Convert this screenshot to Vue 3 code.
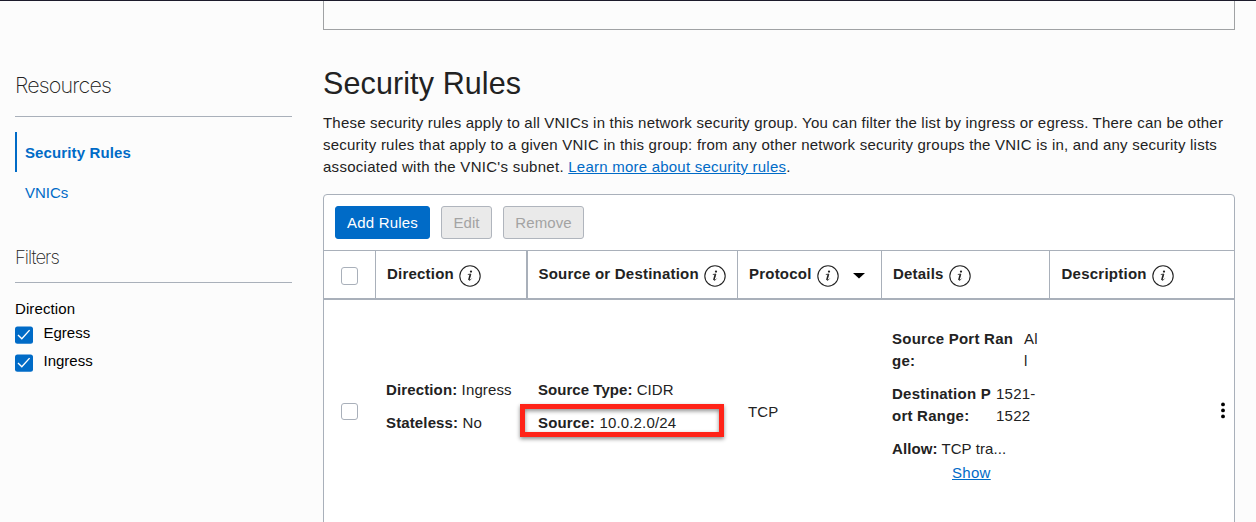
<script setup>
const columns = [
  { id: 'direction', label: 'Direction' },
  { id: 'source', label: 'Source or Destination' },
  { id: 'protocol', label: 'Protocol', sortable: true },
  { id: 'details', label: 'Details' },
  { id: 'description', label: 'Description' },
]
const filters = ['Egress', 'Ingress']
</script>

<template>
  <div class="page">
    <div class="topbar"></div>
    <div class="layout">
      <aside class="sidebar">
        <h3 class="resources">Resources</h3>
        <nav>
          <a class="nav active">Security Rules</a>
          <a class="nav">VNICs</a>
        </nav>
        <h4 class="filters">Filters</h4>
        <div class="filter-label">Direction</div>
        <label v-for="f in filters" :key="f" class="filter">
          <svg width="18" height="18" viewBox="0 0 18 18">
            <rect y="0.6" width="18" height="17.2" rx="2.5" fill="#006bc7" />
            <path d="M3 9.1 L6.8 12.7 L14.6 4.1" fill="none" stroke="#fff" stroke-width="1.4" />
          </svg>
          <span>{{ f }}</span>
        </label>
      </aside>

      <main class="main">
        <div class="panel-end"></div>
        <h1>Security Rules</h1>
        <div class="intro">
          <div class="l1">These security rules apply to all VNICs in this network security group. You can filter the list by ingress or egress. There can be other</div>
          <div class="l2">security rules that apply to a given VNIC in this group: from any other network security groups the VNIC is in, and any security lists</div>
          <div class="l3">associated with the VNIC's subnet. <a class="link">Learn more about security rules</a>.</div>
        </div>

        <section class="card">
          <div class="toolbar">
            <button class="btn primary">Add Rules</button>
            <button class="btn edit" disabled>Edit</button>
            <button class="btn remove" disabled>Remove</button>
          </div>
          <div class="grid head">
            <div class="cell check"><span class="box"></span></div>
            <div v-for="c in columns" :key="c.id" class="cell" :class="c.id">
              <b>{{ c.label }}</b>
              <svg class="info" width="22" height="22" viewBox="0 0 22 22">
                <circle cx="11" cy="11" r="10.2" fill="none" stroke="#222" stroke-width="1.1" />
                <circle cx="12" cy="6.6" r="1.15" fill="#222" />
                <path d="M8.8 9.5 L11.9 9 L10.1 14.6 Q10 15.7 10.9 15.2 Q11.6 14.7 12.5 13.7" fill="none" stroke="#222" stroke-width="0.8" />
                <path d="M11.3 9.2 L9.8 15" stroke="#222" stroke-width="1.4" />
              </svg>
              <svg v-if="c.sortable" class="caret" width="12" height="6" viewBox="0 0 12 6">
                <path d="M0 0 H12 L6 5.6 Z" fill="#000" />
              </svg>
            </div>
          </div>
          <div class="grid row">
            <div class="check"><span class="box"></span></div>
            <div class="stack dir">
              <p><b>Direction:</b> Ingress</p>
              <p><b>Stateless:</b> No</p>
            </div>
            <div class="stack src">
              <p><b>Source Type:</b> CIDR</p>
              <p class="marked"><b>Source:</b> 10.0.2.0/24<span class="marker"></span></p>
            </div>
            <div class="tcp">TCP</div>
            <div class="det">
              <div class="pair"><b class="k1">Source Port Ran<br>ge:</b><span>Al<br>l</span></div>
              <div class="pair"><b class="k2">Destination P<br>ort Range:</b><span>1521-<br>1522</span></div>
              <div class="allow"><b>Allow:</b> TCP tra...</div>
              <a class="link show">Show</a>
            </div>
            <div class="menu">
              <svg width="6" height="18" viewBox="0 0 6 18">
                <circle cx="3" cy="3.4" r="1.9" /><circle cx="3" cy="9.4" r="1.9" /><circle cx="3" cy="15.4" r="1.9" />
              </svg>
            </div>
          </div>
        </section>
      </main>
    </div>
  </div>
</template>

<style>
body { background: #fcfcfc; overflow: hidden; }
</style>

<style scoped>
* { box-sizing: border-box; }
.page {
  height: 522px;
  overflow: hidden;
  background: #fcfcfc;
  color: #222;
  font: 15px/22px "Liberation Sans", Arial, sans-serif;
}
h1, h3, h4, p { margin: 0; font-weight: 400; }
.topbar { height: 1px; background: #1c1b2b; }
.layout { display: flex; }
.sidebar { width: 277px; margin-left: 15px; padding-top: 69px; color: #000; }
.resources {
  height: 47px;
  border-bottom: 1px solid #a9b0ba;
  font: 200 21.5px/31px Inter, sans-serif;
  letter-spacing: -0.85px;
  color: #222;
}
nav { display: flex; flex-direction: column; padding-top: 15px; }
.nav { height: 40px; padding-left: 10px; line-height: 42px; color: #006bc7; }
.nav.active { border-left: 2px solid #006bc7; padding-left: 8px; font-weight: 700; letter-spacing: .12px; }
.filters {
  height: 43px;
  margin-top: 28px;
  border-bottom: 1px solid #a9b0ba;
  font: 200 18.5px/34px Inter, sans-serif;
  letter-spacing: -1px;
  color: #222;
}
.filter-label { margin-top: 15px; letter-spacing: .1px; }
.filter { display: flex; height: 28px; padding-top: 2px; }
.filter svg { margin-top: 4px; margin-right: 10.5px; }

.main { width: 912px; margin-left: 31px; }
.panel-end { height: 29px; border: 1px solid #a0a2a4; border-top: 0; }
h1 { margin-top: 33px; height: 49px; font-size: 30.5px; line-height: 40px; letter-spacing: .11px; }
.intro { height: 82px; white-space: nowrap; }
.l1 { letter-spacing: .208px; }
.l2 { letter-spacing: .226px; }
.l3 { letter-spacing: .28px; }
.l3 .link { letter-spacing: .225px; }
.link { color: #006bc7; text-decoration: underline; }
.card {
  height: 340px;
  background: #fff;
  border: 1px solid #a9b0ba;
  border-radius: 4px 4px 0 0;
}
.toolbar { height: 55px; display: flex; gap: 11px; padding: 11px; }
.btn {
  height: 33px;
  padding: 0;
  border-radius: 3px;
  font: inherit;
  border: 1px solid #b0b5bd;
  background: #eaeaea;
  color: #a3a3a3;
  letter-spacing: .1px;
}
.primary { width: 95px; border-color: #006bc7; background: #006bc7; color: #fff; letter-spacing: .22px; }
.edit { width: 51px; }
.remove { width: 81px; }
.grid { display: grid; grid-template-columns: 52px 152px 210px 144px 168px 184px; }
.head { height: 50px; border-top: 1px solid #a9b0ba; border-bottom: 2px solid #a9b0ba; }
.cell { display: flex; padding-left: 11px; border-right: 1px solid #a9b0ba; line-height: 46px; white-space: nowrap; letter-spacing: .21px; }
.cell.check { padding: 16px 0 0 17px; }
.cell.direction { border-right-width: 2px; }
.cell.source { padding-left: 10.5px; }
.cell.description { border-right: 0; padding-left: 11.5px; letter-spacing: .25px; }
.info { margin: 14px 0 0 5px; flex: none; }
.caret { margin: 22px 0 0 14px; }
.box { display: block; width: 17px; height: 18px; border: 1px solid #a9b0ba; border-radius: 3px; background: #fff; }
.row .box { height: 17px; }
.row > .check { padding: 103px 0 0 17px; }
.row { letter-spacing: .13px; }
.stack { padding-top: 79px; padding-left: 10px; white-space: nowrap; }
.stack p + p { margin-top: 11px; }
.src { letter-spacing: .05px; }
.marked { position: relative; letter-spacing: .17px; }
.marker {
  position: absolute;
  left: -18px;
  top: -8px;
  width: 204px;
  height: 33px;
  border: 5px solid #ff2318;
  box-shadow: 0 2px 4px rgba(0, 0, 0, .45), inset 0 2px 4px rgba(0, 0, 0, .45);
}
.tcp { padding: 101px 0 0 10px; }
.det { padding: 28px 0 0 10px; white-space: nowrap; }
.pair { display: flex; margin-bottom: 11px; letter-spacing: .24px; }
.k1 { width: 132px; }
.k2 { width: 104px; }
.allow { letter-spacing: .08px; }
.show { display: inline-block; margin: 2px 0 0 60px; letter-spacing: .3px; }
.menu { padding: 101px 0 0 170px; }
</style>
